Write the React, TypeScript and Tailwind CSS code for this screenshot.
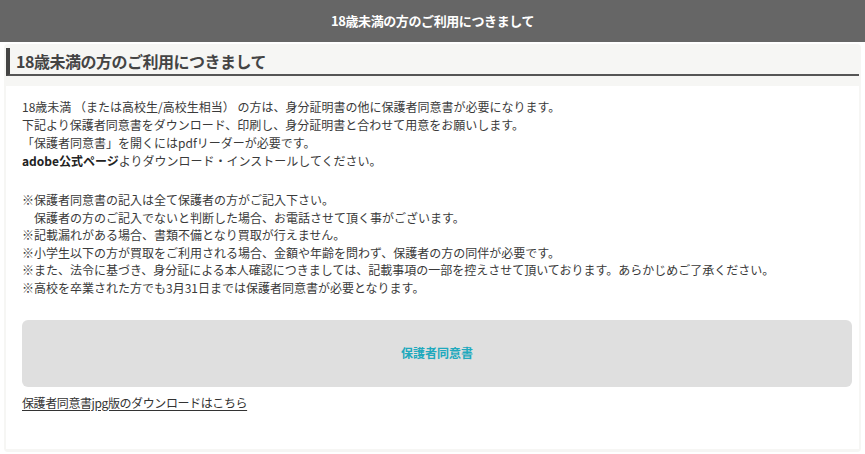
export default function App() {
  const font = { fontFamily: '"Noto Sans CJK JP", "Noto Sans", sans-serif' };
  return (
    <div className="w-[865px] h-[454px] bg-white text-[#333]" style={font}>
      {/* top bar */}
      <div className="h-[42px] bg-[#666666] flex items-center justify-center">
        <h1 className="text-[13px] font-bold text-white tracking-[-0.4px]">18歳未満の方のご利用につきまして</h1>
      </div>

      <div className="mx-[4px] mt-[2px] h-[408px] bg-[#f6f6f4] rounded-[4px] pt-[4px] px-[1px]">
        <h2 className="ml-[1px] mr-[1px] h-[28px] border-l-[4px] border-[#444] border-b-[2px] border-b-[#555] pl-[6px] flex items-center text-[16px] font-bold text-[#444] tracking-[-0.5px]">
          18歳未満の方のご利用につきまして
        </h2>

        <div className="mt-[10px] mx-[1px] h-[363px] bg-white pt-[12px] px-[16px] text-[12px] leading-[18px] text-[#3a3a3a]">
          <p>18歳未満 （または高校生/高校生相当） の方は、身分証明書の他に保護者同意書が必要になります。</p>
          <p>下記より保護者同意書をダウンロード、印刷し、身分証明書と合わせて用意をお願いします。</p>
          <p>「保護者同意書」を開くにはpdfリーダーが必要です。</p>
          <p><a className="text-[#222] font-bold">adobe公式ページ</a>よりダウンロード・インストールしてください。</p>

          <div className="mt-[21px] leading-[17.6px]">
            <p>※保護者同意書の記入は全て保護者の方がご記入下さい。</p>
            <p className="pl-[12px]">保護者の方のご記入でないと判断した場合、お電話させて頂く事がございます。</p>
            <p>※記載漏れがある場合、書類不備となり買取が行えません。</p>
            <p>※小学生以下の方が買取をご利用される場合、金額や年齢を問わず、保護者の方の同伴が必要です。</p>
            <p>※また、法令に基づき、身分証による本人確認につきましては、記載事項の一部を控えさせて頂いております。あらかじめご了承ください。</p>
            <p>※高校を卒業された方でも3月31日までは保護者同意書が必要となります。</p>
          </div>

          <button className="mt-[23px] w-[830px] h-[67px] rounded-[6px] bg-[#dfdfdf] flex items-center justify-center text-[12px] font-bold text-[#20a9bd]">
            保護者同意書
          </button>

          <a className="block mt-[7px] underline underline-offset-[2px] text-[12px] text-[#333] tracking-[-0.4px]">保護者同意書jpg版のダウンロードはこちら</a>
        </div>
      </div>
    </div>
  );
}
